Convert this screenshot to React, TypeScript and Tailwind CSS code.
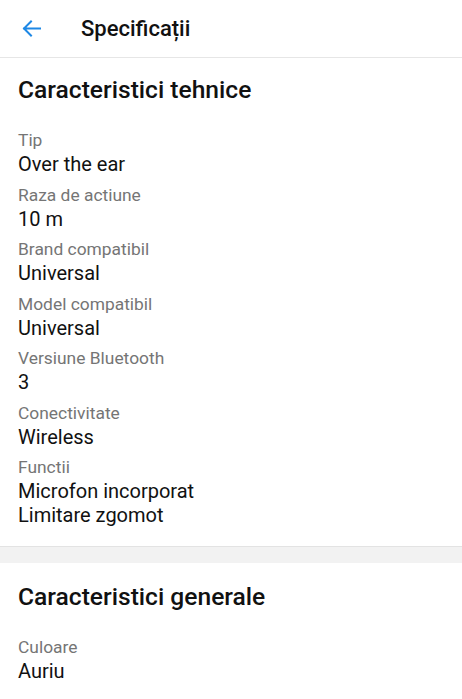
import React from 'react';

const tehnice = [
  { label: 'Tip', values: ['Over the ear'] },
  { label: 'Raza de actiune', values: ['10 m'] },
  { label: 'Brand compatibil', values: ['Universal'] },
  { label: 'Model compatibil', values: ['Universal'] },
  { label: 'Versiune Bluetooth', values: ['3'] },
  { label: 'Conectivitate', values: ['Wireless'] },
  { label: 'Functii', values: ['Microfon incorporat', 'Limitare zgomot'] },
];

const generale = [{ label: 'Culoare', values: ['Auriu'] }];

type Spec = { label: string; values: string[] };

const Section = ({ title, items, top }: { title: string; items: Spec[]; top: string }) => (
  <section className={`bg-white px-[18px] pb-[12px] ${top}`}>
    <h2 className="text-[24.6px] leading-[32px] font-medium text-[#111]">{title}</h2>
    <div className="mt-[22px] flex flex-col">
      {items.map((item) => (
        <div key={item.label} className="flex flex-col pb-[6.5px]">
          <span className="text-[17.4px] leading-[24px] text-[#757575]">{item.label}</span>
          {item.values.map((v) => (
            <span key={v} className="text-[20px] leading-[24px] text-[#111]">
              {v}
            </span>
          ))}
        </div>
      ))}
    </div>
  </section>
);

export default function App() {
  return (
    <div className="min-h-screen bg-white font-['Roboto',sans-serif]">
      <header className="h-[58px] flex items-center border-b border-[#e6e6e6] shadow-[0_1px_2px_rgba(0,0,0,0.06)]">
        <button className="w-[81px] h-full flex items-center pl-[22px]">
          <svg width="19" height="17" viewBox="0 0 19 17" fill="none">
            <path d="M18 8.5H2M9 1.5L2 8.5l7 7" stroke="#1e88e5" strokeWidth="2" strokeLinecap="square" />
          </svg>
        </button>
        <h1 className="text-[22px] font-medium text-[#111]">Specificații</h1>
      </header>
      <Section title="Caracteristici tehnice" items={tehnice} top="pt-[16px]" />
      <div className="h-[17px] bg-[#f2f2f2] border-t border-[#e3e3e3]" />
      <Section title="Caracteristici generale" items={generale} top="pt-[18px]" />
    </div>
  );
}
